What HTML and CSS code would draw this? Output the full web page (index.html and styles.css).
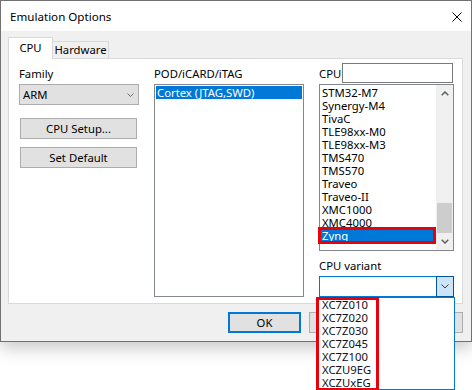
FILE: index.html
```html
<!DOCTYPE html>
<html lang="en">
<head>
    <meta charset="UTF-8">
    <title>Emulation Options</title>
    <link rel="stylesheet" href="styles.css">
</head>
<body>
    <div class="window">
        <div class="titlebar">
            <span class="title">Emulation Options</span>
            <svg class="close" width="10" height="10" viewBox="0 0 10 10">
                <path d="M0.5 0.5 L9.5 9.5 M9.5 0.5 L0.5 9.5" stroke="#000" stroke-width="1" fill="none"/>
            </svg>
        </div>

        <div class="client">
            <div class="tabs">
                <div class="tab active">CPU</div>
                <div class="tab">Hardware</div>
            </div>

            <div class="panel">
                <!-- Family column -->
                <div class="col">
                    <div class="label">Family</div>
                    <div class="combo family">
                        <span>ARM</span>
                        <svg class="chev" width="7" height="4" viewBox="0 0 7 4">
                            <path d="M0.5 0.5 L3.5 3.5 L6.5 0.5" stroke="#707070" fill="none"/>
                        </svg>
                    </div>
                    <button class="btn side setup">CPU Setup...</button>
                    <button class="btn side">Set Default</button>
                </div>

                <!-- POD column -->
                <div class="col">
                    <div class="label">POD/iCARD/iTAG</div>
                    <div class="listbox pod-list">
                        <div class="item selected">Cortex (JTAG,SWD)</div>
                    </div>
                </div>

                <!-- CPU column -->
                <div class="col">
                    <div class="cpu-head">
                        <span>CPU</span>
                        <div class="textbox"></div>
                    </div>
                    <div class="listbox cpu-list">
                        <div class="items">
                            <div class="item">STM32-M7</div>
                            <div class="item">Synergy-M4</div>
                            <div class="item">TivaC</div>
                            <div class="item">TLE98xx-M0</div>
                            <div class="item">TLE98xx-M3</div>
                            <div class="item">TMS470</div>
                            <div class="item">TMS570</div>
                            <div class="item">Traveo</div>
                            <div class="item">Traveo-II</div>
                            <div class="item">XMC1000</div>
                            <div class="item">XMC4000</div>
                            <div class="item selected">Zynq</div>
                        </div>
                        <div class="scrollbar">
                            <div class="arrow">
                                <svg width="8" height="5" viewBox="0 0 8 5">
                                    <path d="M0.7 4.3 L4 1 L7.3 4.3" stroke="#606060" stroke-width="1.5" fill="none"/>
                                </svg>
                            </div>
                            <div class="track"><div class="thumb"></div></div>
                            <div class="arrow">
                                <svg width="8" height="5" viewBox="0 0 8 5">
                                    <path d="M0.7 0.7 L4 4 L7.3 0.7" stroke="#606060" stroke-width="1.5" fill="none"/>
                                </svg>
                            </div>
                        </div>
                        <div class="mark zynq-mark"></div>
                    </div>

                    <div class="label variant-label">CPU variant</div>
                    <div class="combo variant">
                        <div class="drop-btn">
                            <svg width="8" height="5" viewBox="0 0 8 5">
                                <path d="M0.5 0.5 L4 4 L7.5 0.5" stroke="#3c3c3c" fill="none"/>
                            </svg>
                        </div>
                        <div class="dropdown">
                            <div class="item">XC7Z010</div>
                            <div class="item">XC7Z020</div>
                            <div class="item">XC7Z030</div>
                            <div class="item">XC7Z045</div>
                            <div class="item">XC7Z100</div>
                            <div class="item">XCZU9EG</div>
                            <div class="item">XCZUxEG</div>
                        </div>
                        <div class="mark variant-mark"></div>
                    </div>
                </div>
            </div>

            <div class="buttons">
                <button class="btn bottom default">OK</button>
                <button class="btn bottom">Cancel</button>
                <button class="btn bottom">Help</button>
            </div>
        </div>
    </div>
</body>
</html>
```

FILE: styles.css
```css
* {
    box-sizing: border-box;
}

body {
    margin: 0;
    min-height: 390px;
    background-color: #fff;
    font-family: "Noto Sans", "Open Sans", sans-serif;
    font-size: 11.3px;
    color: #000;
}

.window {
    width: 472px;
    height: 342px;
    border: 1px solid #717171;
    background-color: #f0f0f0;
    box-shadow: 0 6px 16px rgba(0, 0, 0, 0.22);
}

.titlebar {
    height: 30px;
    background-color: #fff;
    display: flex;
    align-items: center;
    justify-content: space-between;
    padding: 0 9px 0 9px;
}

.title {
    font-size: 11.6px;
    margin-top: 1px;
}

.close {
    display: block;
    margin-top: 1px;
}

.client {
    padding: 6px 8px 0 7px;
}

/* Tabs */
.tabs {
    display: flex;
    align-items: flex-end;
    height: 21px;
}

.tab {
    height: 17px;
    line-height: 15px;
    padding: 0;
    border: 1px solid #d9d9d9;
    border-bottom: none;
    border-left: none;
    background-color: #f0f0f0;
    width: 56px;
    text-align: center;
}

.tab.active {
    height: 22px;
    line-height: 19px;
    width: 45px;
    border-left: 1px solid #d9d9d9;
    background-color: #fff;
    margin-bottom: -1px;
    position: relative;
    z-index: 1;
}

.panel {
    width: 455px;
    height: 246px;
    background-color: #fff;
    border: 1px solid #d9d9d9;
    padding: 4px 0 0 10px;
    display: grid;
    grid-template-columns: 120px 150px 135px;
    column-gap: 15px;
    align-items: start;
}

.col {
    display: flex;
    flex-direction: column;
}

.label {
    height: 21px;
    line-height: 21px;
}

/* Combo boxes */
.combo {
    height: 21px;
    display: flex;
    align-items: center;
}

.combo.family {
    background-color: #e1e1e1;
    border: 1px solid #adadad;
    padding: 0 3px 0 3px;
    justify-content: space-between;
}

.chev {
    display: block;
    margin-right: 1px;
}

/* Buttons */
.btn {
    font: inherit;
    color: #000;
    background-color: #e1e1e1;
    border: 1px solid #adadad;
    height: 21px;
    padding: 0;
}

.btn.side {
    width: 117px;
    margin-left: 1px;
    margin-top: 8px;
}

.btn.setup {
    margin-top: 13px;
}

.btn.default {
    border: 2px solid #0078d7;
}

/* List boxes */
.listbox {
    border: 1px solid #828790;
    background-color: #fff;
    padding: 1px 0;
}

.pod-list {
    height: 213px;
    padding: 1px;
}

.item {
    height: 13px;
    line-height: 13px;
    padding-left: 1px;
    white-space: nowrap;
}

.item.selected {
    background-color: #0078d7;
    color: #fff;
}

.cpu-head {
    height: 21px;
    display: flex;
    align-items: flex-start;
    justify-content: space-between;
}

.cpu-head span {
    line-height: 21px;
}

.textbox {
    width: 111px;
    height: 20px;
    border: 1px solid #7a7a7a;
    margin-right: 1px;
}

.cpu-list {
    height: 167px;
    display: flex;
    padding: 0;
    position: relative;
}

.cpu-list .items {
    flex: 1;
    padding: 1px 0 0 1px;
}

.scrollbar {
    width: 17px;
    background-color: #f0f0f0;
    display: flex;
    flex-direction: column;
}

.arrow {
    height: 17px;
    display: flex;
    align-items: center;
    justify-content: center;
}

.arrow svg {
    display: block;
}

.track {
    flex: 1;
    display: flex;
    flex-direction: column;
    justify-content: flex-end;
}

.thumb {
    height: 30px;
    margin: 0 1px;
    background-color: #cdcdcd;
}

.variant-label {
    margin-top: 4px;
}

.combo.variant {
    border: 1px solid #0078d7;
    background-color: #fff;
    justify-content: flex-end;
    position: relative;
}

.drop-btn {
    width: 18px;
    height: 21px;
    margin: -1px -1px -1px 0;
    background-color: #cce4f7;
    border: 1px solid #005499;
    display: flex;
    align-items: center;
    justify-content: center;
}

.drop-btn svg {
    display: block;
}

.dropdown {
    position: absolute;
    top: 20px;
    left: -2px;
    width: 137px;
    background-color: #fff;
    border: 1px solid #0078d7;
    padding-left: 2px;
    z-index: 2;
}

.dropdown .item {
    color: #101020;
}

/* Red annotation boxes */
.mark {
    position: absolute;
    border: 3px solid #e8000b;
    z-index: 3;
}

.zynq-mark {
    left: -2px;
    top: 142px;
    width: 118px;
    height: 17px;
}

.variant-mark {
    left: -4px;
    top: 20px;
    width: 63px;
    height: 94px;
}

.buttons {
    display: flex;
    justify-content: flex-end;
    gap: 8px;
    margin-top: 8px;
    padding-right: 0;
}

.btn.bottom {
    width: 73px;
}
```
